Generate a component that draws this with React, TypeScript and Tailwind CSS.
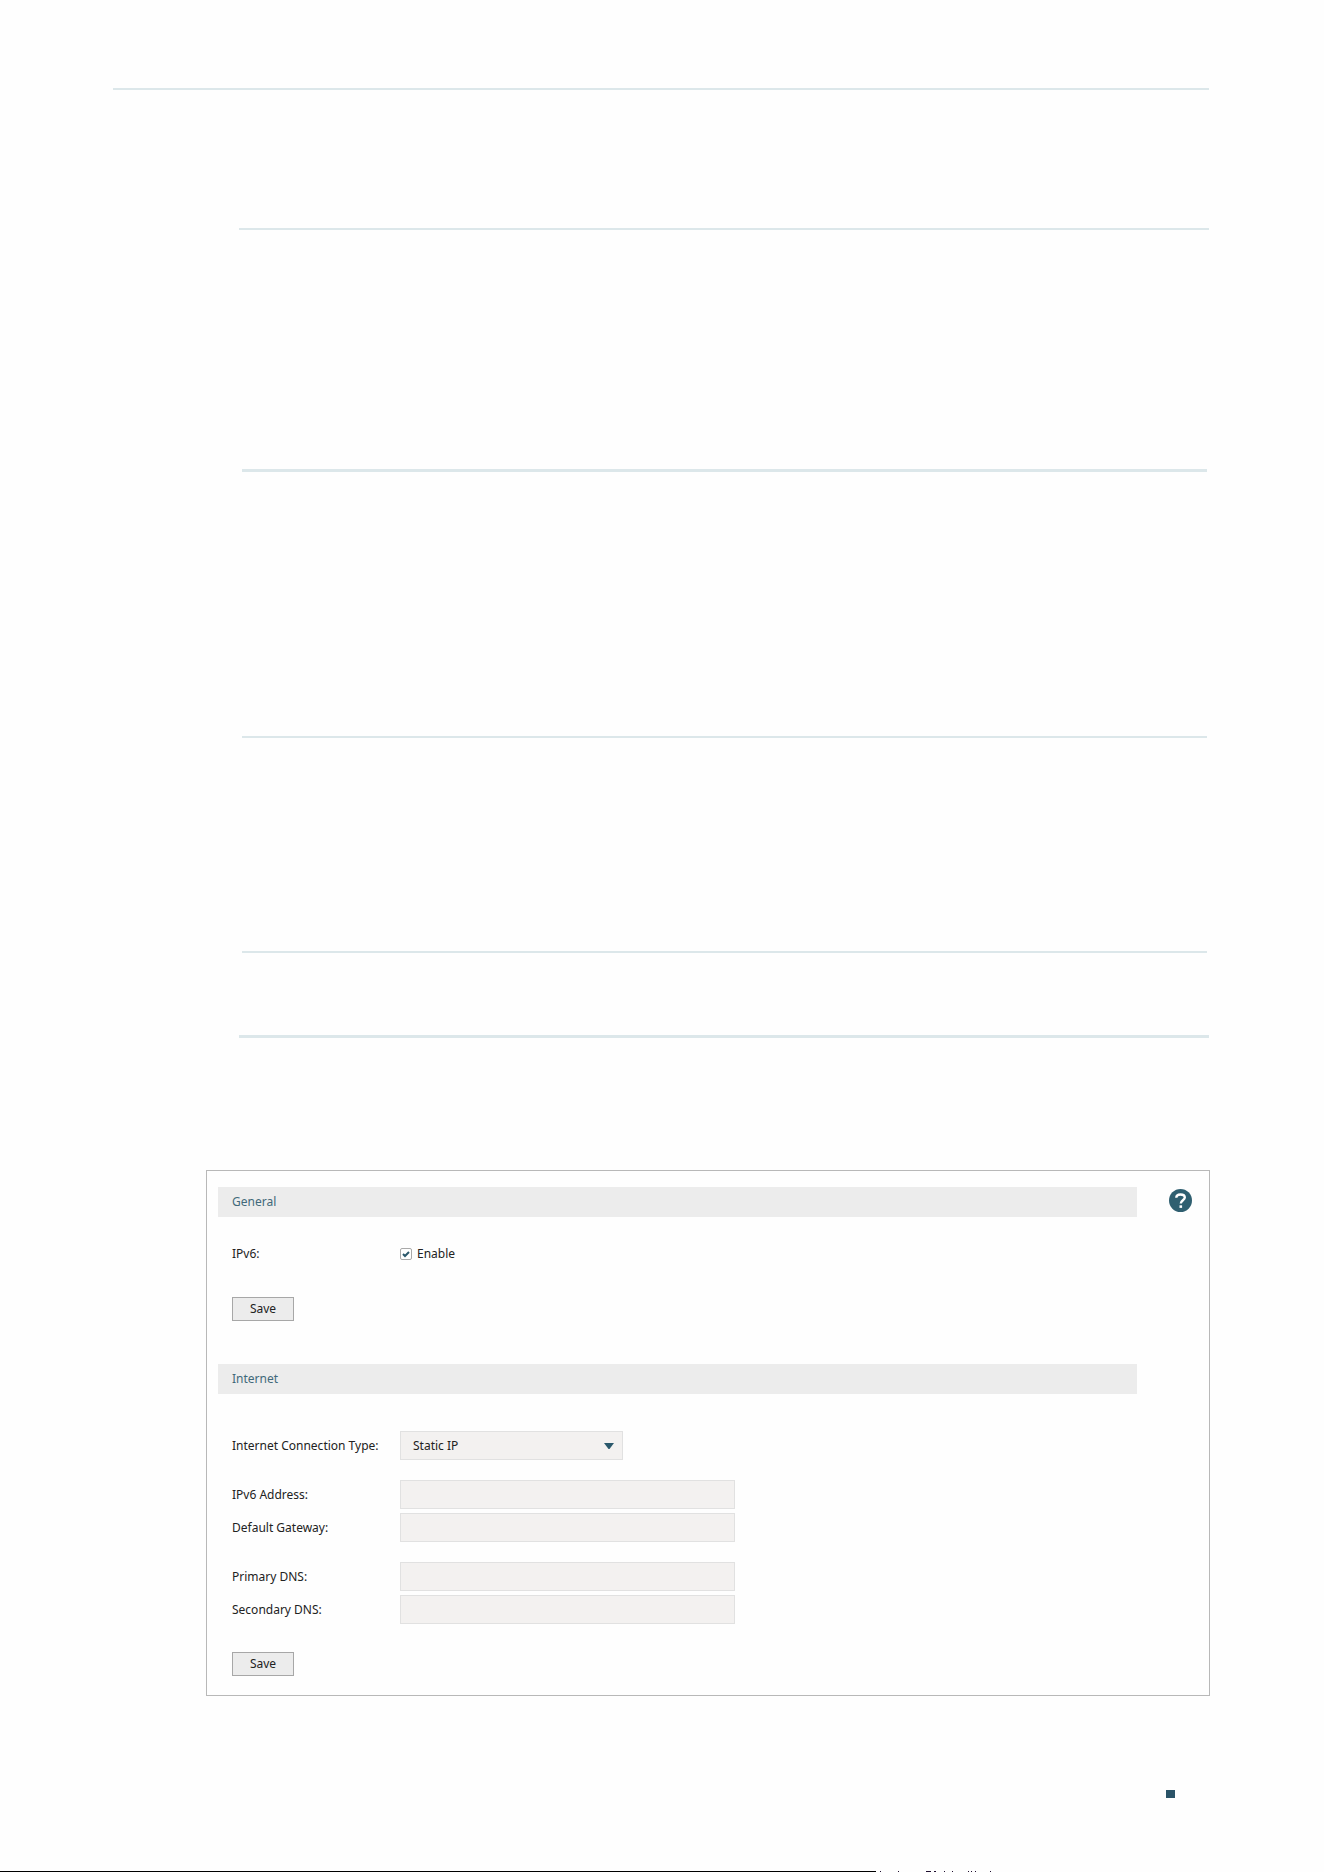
import { ReactNode } from 'react';

interface FieldProps {
  id: string;
  label: string;
  children: ReactNode;
}

const rules = [
  'mt-[138px] ml-[126px] h-[2px]',
  'mt-[239px] ml-[129px] mr-[2px] h-[3px]',
  'mt-[264px] ml-[129px] mr-[2px] h-[2px]',
  'mt-[213px] ml-[129px] mr-[2px] h-[2px]',
  'mt-[82px] ml-[126px] h-[3px]',
];

function SectionHeader({ title }: { title: string }) {
  return (
    <h2 className="h-[30px] bg-[#ececec] px-[14px] leading-[30px] text-[#41697a]">{title}</h2>
  );
}

function Field({ id, label, children }: FieldProps) {
  return (
    <div className="flex items-center">
      <label htmlFor={id} className="w-[168px] shrink-0">
        {label}
      </label>
      {children}
    </div>
  );
}

function TextField({ id, label }: { id: string; label: string }) {
  return (
    <Field id={id} label={label}>
      <input
        id={id}
        type="text"
        className="h-[29px] w-full max-w-[335px] border border-[#e1e1e1] bg-[#f3f1f0] px-3 outline-none"
      />
    </Field>
  );
}

function SaveButton() {
  return (
    <button
      type="button"
      className="block h-6 w-[62px] border border-[#a7a7a7] bg-[#ececec] leading-[22px]"
    >
      Save
    </button>
  );
}

export default function App() {
  return (
    <div className="flex min-h-screen flex-col bg-[#fefefe] font-['Noto_Sans','Liberation_Sans',sans-serif] text-[12px] leading-4 text-[#222]">
      <main className="ml-[113px] mr-[115px] pt-[88px]">
        <hr className="h-[2px] border-0 bg-[#dce7ea]" />
        {rules.map((rule) => (
          <hr key={rule} className={`border-0 bg-[#dce7ea] ${rule}`} />
        ))}

        {/* IPv6 settings */}
        <form className="mt-[132px] ml-[93px] -mr-px flex items-start border border-[#b8b8b8] bg-[#fefefe] pt-4 pr-[17px] pb-[19px] pl-[11px]">
          <div className="grow">
            <SectionHeader title="General" />
            <div className="px-[14px] pt-[29px] pb-[43px]">
              <Field id="ipv6" label="IPv6:">
                <span className="relative flex items-center">
                  <input
                    id="ipv6"
                    type="checkbox"
                    defaultChecked
                    className="peer size-3 appearance-none rounded-xs border border-[#a9a9a9] bg-white"
                  />
                  <svg
                    className="pointer-events-none absolute top-[2px] left-[2px] hidden size-2 peer-checked:block"
                    viewBox="0 0 8 8"
                  >
                    <path d="M1 4l2 2 4-4" fill="none" stroke="#2a586b" strokeWidth="2" />
                  </svg>
                </span>
                <label htmlFor="ipv6" className="ml-[5px]">
                  Enable
                </label>
              </Field>
              <div className="mt-[35px]">
                <SaveButton />
              </div>
            </div>

            <SectionHeader title="Internet" />
            <div className="px-[14px] pt-[37px]">
              <Field id="connection" label="Internet Connection Type:">
                <span className="relative w-full max-w-[223px]">
                  <select
                    id="connection"
                    className="block h-[29px] w-full appearance-none border border-[#e1e1e1] bg-[#f3f1f0] px-3 outline-none"
                  >
                    <option>Static IP</option>
                  </select>
                  <svg
                    className="pointer-events-none absolute top-3 right-[9px] h-[6px] w-[10px]"
                    viewBox="0 0 10 6"
                  >
                    <path d="M0 0h10L5.500 6h-1z" fill="#2a586b" />
                  </svg>
                </span>
              </Field>
              <div className="mt-5 flex flex-col gap-1">
                <TextField id="address" label="IPv6 Address:" />
                <TextField id="gateway" label="Default Gateway:" />
              </div>
              <div className="mt-5 flex flex-col gap-1">
                <TextField id="primary" label="Primary DNS:" />
                <TextField id="secondary" label="Secondary DNS:" />
              </div>
              <div className="mt-7">
                <SaveButton />
              </div>
            </div>
          </div>

          <button type="button" aria-label="Help" className="mt-[2px] ml-8 shrink-0">
            <svg className="size-[23px]" viewBox="0 0 23 23">
              <circle cx="11.500" cy="11.500" r="11.500" fill="#2f5f70" />
              <path
                d="M7.300 8.800C7.300 6.500 9 5.500 11.500 5.500s4.300 1.100 4.300 3.100c0 2.600-4 2.900-4 5.900"
                fill="none"
                stroke="#fff"
                strokeWidth="2.400"
              />
              <path d="M10.500 16.300h2.600v2.600h-2.600z" fill="#fff" />
            </svg>
          </button>
        </form>
      </main>

      <footer className="mt-auto">
        <div className="mr-[149px] mb-[73px] ml-auto h-2 w-[9px] bg-[#2a5367]" />
        <div className="flex">
          <hr className="h-px grow border-0 bg-black" />
          <svg className="mr-[333px] h-px w-[115px] shrink-0" viewBox="0 0 115 1" aria-hidden="true">
            <path
              d="M4 0h1v1h-1zM22 0h1v1h-1zM50 0h5v1h-5zM58 0h2v1h-2zM68 0h1v1h-1zM76 0h1v1h-1zM92 0h1v1h-1zM95 0h1v1h-1zM99 0h1v1h-1zM114 0h1v1h-1z"
              fill="#201030"
            />
          </svg>
        </div>
      </footer>
    </div>
  );
}
